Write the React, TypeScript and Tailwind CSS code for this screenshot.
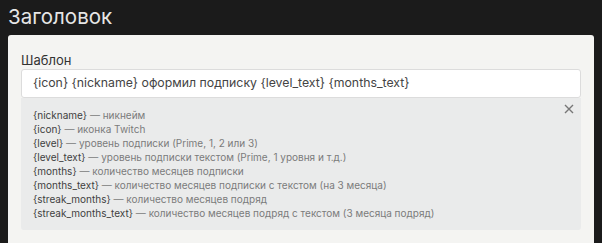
const vars: [string, string][] = [
  ["{nickname}", "никнейм"],
  ["{icon}", "иконка Twitch"],
  ["{level}", "уровень подписки (Prime, 1, 2 или 3)"],
  ["{level_text}", "уровень подписки текстом (Prime, 1 уровня и т.д.)"],
  ["{months}", "количество месяцев подписки"],
  ["{months_text}", "количество месяцев подписки с текстом (на 3 месяца)"],
  ["{streak_months}", "количество месяцев подряд"],
  ["{streak_months_text}", "количество месяцев подряд с текстом (3 месяца подряд)"],
];

export default function App() {
  return (
    <div
      className="h-[243px] overflow-hidden bg-[#1b1b1b] px-2 pt-[3px]"
      style={{ fontFamily: "Inter, 'Noto Sans', sans-serif" }}
    >
      <h1 className="text-[20.5px] leading-[28px] text-[#e6e6e6] font-normal">Заголовок</h1>
      <div className="mt-[4px] rounded-[3px] bg-[#f4f4f2] px-[13px] pt-[17px] pb-6">
        <div className="text-[13px] leading-[16px] text-[#333]">Шаблон</div>
        <div className="mt-[1px] h-[29px] rounded-[3px] border border-[#dcdcdc] bg-white px-[11px] flex items-center text-[12.3px] text-[#444]">
          {"{icon} {nickname} оформил подписку {level_text} {months_text}"}
        </div>
        <div className="relative rounded-b-[3px] bg-[#eaebeb] px-[12px] pt-[10px] pb-[10px]">
          <button className="absolute right-[5px] top-[4px] text-[#777]">
            <svg width="14" height="14" viewBox="0 0 14 14" fill="none" stroke="currentColor" strokeWidth="1.4">
              <path d="M3 3l8 8M11 3l-8 8" />
            </svg>
          </button>
          {vars.map(([k, d]) => (
            <div key={k} className="text-[10px] leading-[14px] text-[#3f3f3f]">
              {k} <span className="text-[#7b7b7b]">— {d}</span>
            </div>
          ))}
        </div>
      </div>
    </div>
  );
}
